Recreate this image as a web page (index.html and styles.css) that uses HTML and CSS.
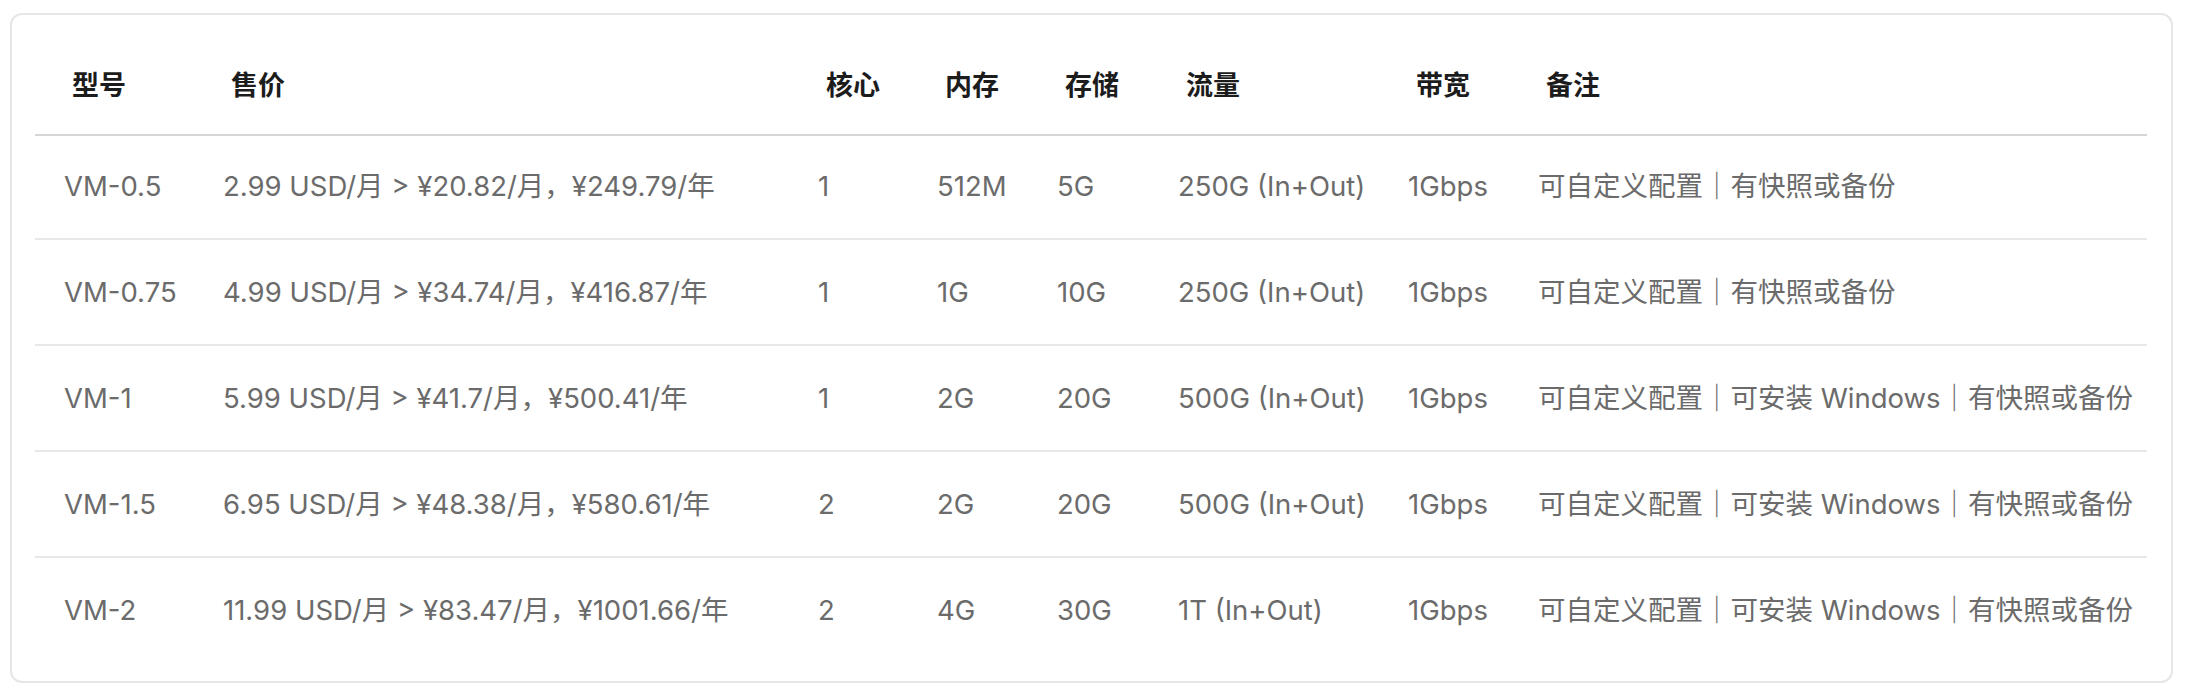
FILE: index.html
```html
<!DOCTYPE html>
<html lang="zh-CN">
<head>
<meta charset="utf-8">
<title>VM 价格表</title>
<link rel="stylesheet" href="styles.css">
</head>
<body>
<div class="card">
  <table class="plans">
    <colgroup>
      <col class="c-model">
      <col class="c-price">
      <col class="c-core">
      <col class="c-mem">
      <col class="c-disk">
      <col class="c-traffic">
      <col class="c-bw">
      <col class="c-note">
    </colgroup>
    <thead>
      <tr>
        <th>型号</th><th>售价</th><th>核心</th><th>内存</th><th>存储</th><th>流量</th><th>带宽</th><th>备注</th>
      </tr>
    </thead>
    <tbody>
      <tr>
        <td>VM-0.5</td><td>2.99 USD/月 &gt; ¥20.82/月，¥249.79/年</td><td>1</td><td>512M</td><td>5G</td><td>250G (In+Out)</td><td>1Gbps</td><td>可自定义配置｜有快照或备份</td>
      </tr>
      <tr>
        <td>VM-0.75</td><td>4.99 USD/月 &gt; ¥34.74/月，¥416.87/年</td><td>1</td><td>1G</td><td>10G</td><td>250G (In+Out)</td><td>1Gbps</td><td>可自定义配置｜有快照或备份</td>
      </tr>
      <tr>
        <td>VM-1</td><td>5.99 USD/月 &gt; ¥41.7/月，¥500.41/年</td><td>1</td><td>2G</td><td>20G</td><td>500G (In+Out)</td><td>1Gbps</td><td>可自定义配置｜可安装 Windows｜有快照或备份</td>
      </tr>
      <tr>
        <td>VM-1.5</td><td>6.95 USD/月 &gt; ¥48.38/月，¥580.61/年</td><td>2</td><td>2G</td><td>20G</td><td>500G (In+Out)</td><td>1Gbps</td><td>可自定义配置｜可安装 Windows｜有快照或备份</td>
      </tr>
      <tr>
        <td>VM-2</td><td>11.99 USD/月 &gt; ¥83.47/月，¥1001.66/年</td><td>2</td><td>4G</td><td>30G</td><td>1T (In+Out)</td><td>1Gbps</td><td>可自定义配置｜可安装 Windows｜有快照或备份</td>
      </tr>
    </tbody>
  </table>
</div>
</body>
</html>
```

FILE: styles.css
```css
* { box-sizing: border-box; }

html, body {
  margin: 0;
  padding: 0;
  background: #ffffff;
}

body {
  font-family: "Inter", "Noto Sans CJK SC", sans-serif;
  padding: 13px 13px 0 10px;
}

.card {
  border: 2px solid #e6e6e6;
  border-radius: 12px;
  padding: 23px 24px 19px 23px;
  background: #fff;
}

.plans {
  width: 100%;
  border-collapse: collapse;
  table-layout: fixed;
}

.c-model { width: 159px; }
.c-price { width: 595px; }
.c-core { width: 119px; }
.c-mem { width: 120px; }
.c-disk { width: 121px; }
.c-traffic { width: 230px; }
.c-bw { width: 130px; }
.c-note { width: auto; }

.plans th {
  text-align: left;
  font-weight: 700;
  font-size: 27px;
  line-height: 40px;
  color: #1c1c1c;
  padding: 28px 0 28px 37px;
  border-bottom: 2px solid #d6d6d6;
  white-space: nowrap;
}

.plans td {
  font-size: 27.5px;
  line-height: 40px;
  color: #6b6b6b;
  padding: 32px 0 32px 29px;
  border-bottom: 2px solid #e8e8e8;
  white-space: nowrap;
}

.plans tbody tr:first-child td {
  padding-top: 30px;
}

.plans tbody tr:last-child td {
  border-bottom: none;
}
```
